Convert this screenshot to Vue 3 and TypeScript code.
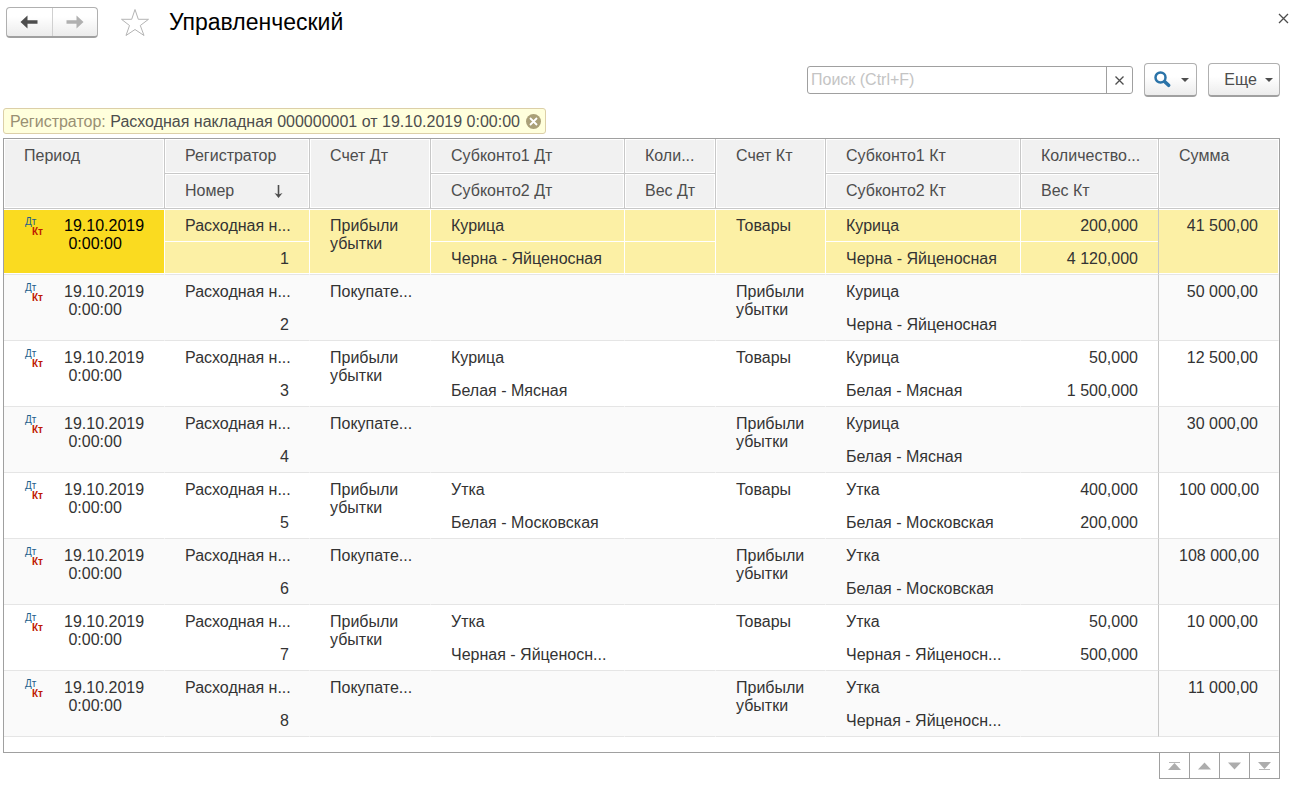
<script setup lang="ts">
import { ref } from 'vue'

interface Entry {
  id: number
  debit: string
  debitSub1: string
  debitSub2: string
  credit: string
  creditSub1: string
  creditSub2: string
  quantity: string
  weight: string
  sum: string
}

const query = ref('')
const selected = ref(1)

const PROFIT = 'Прибыли\nубытки'
const BUYERS = 'Покупате...'
const GOODS = 'Товары'

function sale(id: number, kind: string, breed: string, quantity: string, weight: string, sum: string): Entry {
  return { id, debit: PROFIT, debitSub1: kind, debitSub2: breed, credit: GOODS, creditSub1: kind, creditSub2: breed, quantity, weight, sum }
}

function income(id: number, kind: string, breed: string, sum: string): Entry {
  return { id, debit: BUYERS, debitSub1: '', debitSub2: '', credit: PROFIT, creditSub1: kind, creditSub2: breed, quantity: '', weight: '', sum }
}

const entries: Entry[] = [
  sale(1, 'Курица', 'Черна - Яйценосная', '200,000', '4 120,000', '41 500,00'),
  income(2, 'Курица', 'Черна - Яйценосная', '50 000,00'),
  sale(3, 'Курица', 'Белая - Мясная', '50,000', '1 500,000', '12 500,00'),
  income(4, 'Курица', 'Белая - Мясная', '30 000,00'),
  sale(5, 'Утка', 'Белая - Московская', '400,000', '200,000', '100 000,00'),
  income(6, 'Утка', 'Белая - Московская', '108 000,00'),
  sale(7, 'Утка', 'Черная - Яйценосн...', '50,000', '500,000', '10 000,00'),
  income(8, 'Утка', 'Черная - Яйценосн...', '11 000,00'),
]
</script>

<template>
  <main class="page">
    <header class="titlebar">
      <div class="nav">
        <button type="button" aria-label="Назад">
          <svg width="18" height="14" viewBox="0 0 18 14"><path d="M0.500 7L7.500 0.500V5.200H17.500V8.800H7.500V13.500Z" fill="#4d4d4d" /></svg>
        </button>
        <button type="button" aria-label="Вперед">
          <svg width="18" height="14" viewBox="0 0 18 14"><path d="M17.500 7L10.500 0.500V5.200H0.500V8.800H10.500V13.500Z" fill="#b0b0b0" /></svg>
        </button>
      </div>
      <button type="button" class="plain star" aria-label="Избранное">
        <svg width="30" height="30" viewBox="0 0 30 30"><path d="M15 1.500L18.300 11.300H28.500L20.300 17.500L24 27.500L15 21.500L6 27.500L9.500 17.500L1.500 11.300H11.700Z" fill="#fff" stroke="#b4b4b4" /></svg>
      </button>
      <h1>Управленческий</h1>
      <button type="button" class="plain close" aria-label="Закрыть">
        <svg width="11" height="11" viewBox="0 0 11 11"><path d="M1 1L10 10M10 1L1 10" stroke="#4d4d4d" stroke-width="1.300" /></svg>
      </button>
    </header>

    <div class="toolbar">
      <div class="search">
        <input v-model="query" type="text" placeholder="Поиск (Ctrl+F)" aria-label="Поиск">
        <button type="button" aria-label="Очистить" @click="query = ''">
          <svg width="9" height="9" viewBox="0 0 9 9"><path d="M0.500 0.500L8.500 8.500M8.500 0.500L0.500 8.500" stroke="#4d4d4d" stroke-width="1.300" /></svg>
        </button>
      </div>
      <button type="button" class="raised find" aria-label="Найти">
        <svg width="17" height="17" viewBox="0 0 17 17" fill="none" stroke="#2a73a8"><circle cx="6.500" cy="6.500" r="5" stroke-width="2.500" /><path d="M10.800 10.800L14.600 14.300" stroke-width="3.600" stroke-linecap="round" /></svg>
        <svg width="8" height="4" viewBox="0 0 8 4"><path d="M0 0H8L4 4Z" fill="#4d4d4d" /></svg>
      </button>
      <button type="button" class="raised more">
        Еще
        <svg width="8" height="4" viewBox="0 0 8 4"><path d="M0 0H8L4 4Z" fill="#4d4d4d" /></svg>
      </button>
    </div>

    <div class="filter">
      <span class="filter-text"><span class="filter-name">Регистратор:</span> Расходная накладная 000000001 от 19.10.2019 0:00:00</span>
      <button type="button" class="plain" aria-label="Снять отбор">
        <svg width="15" height="15" viewBox="0 0 15 15"><circle cx="7.500" cy="7.500" r="7.500" fill="#aaa078" /><path d="M4 4L11 11M11 4L4 11" stroke="#fff" stroke-width="1.800" /></svg>
      </button>
    </div>

    <div class="grid">
      <table>
        <colgroup>
          <col class="w-period"><col class="w-doc"><col class="w-debit"><col class="w-debit-sub"><col class="w-debit-qty">
          <col class="w-credit"><col class="w-credit-sub"><col class="w-credit-qty"><col class="w-sum">
        </colgroup>
        <thead>
          <tr>
            <th rowspan="2">Период</th>
            <th>Регистратор</th>
            <th rowspan="2">Счет Дт</th>
            <th>Субконто1 Дт</th>
            <th>Коли...</th>
            <th rowspan="2">Счет Кт</th>
            <th>Субконто1 Кт</th>
            <th>Количество...</th>
            <th rowspan="2" class="last">Сумма</th>
          </tr>
          <tr>
            <th>
              <div class="sorted">
                Номер
                <svg width="9" height="13" viewBox="0 0 9 13"><path d="M4.500 0V10" stroke="#4d4d4d" stroke-width="1.600" /><path d="M0.500 8L4.500 9.500L8.500 8L4.500 13Z" fill="#4d4d4d" /></svg>
              </div>
            </th>
            <th>Субконто2 Дт</th>
            <th>Вес Дт</th>
            <th>Субконто2 Кт</th>
            <th>Вес Кт</th>
          </tr>
        </thead>
        <tbody v-for="e in entries" :key="e.id" :class="{ selected: e.id === selected }" @click="selected = e.id">
          <tr>
            <td rowspan="2" class="tall period">
              <div class="stamp">
                <span class="dtkt"><span class="dt">Дт</span><span class="kt">Кт</span></span>
                <span>19.10.2019{{ '\n 0:00:00' }}</span>
              </div>
            </td>
            <td>Расходная н...</td>
            <td rowspan="2" class="tall">{{ e.debit }}</td>
            <td>{{ e.debitSub1 }}</td>
            <td />
            <td rowspan="2" class="tall">{{ e.credit }}</td>
            <td>{{ e.creditSub1 }}</td>
            <td class="num ruled">{{ e.quantity }}</td>
            <td rowspan="2" class="tall num last">{{ e.sum }}</td>
          </tr>
          <tr class="lower">
            <td class="num">{{ e.id }}</td>
            <td>{{ e.debitSub2 }}</td>
            <td />
            <td>{{ e.creditSub2 }}</td>
            <td class="num ruled">{{ e.weight }}</td>
          </tr>
        </tbody>
      </table>
    </div>

    <nav class="pager">
      <button type="button" aria-label="В начало">
        <svg width="13" height="8" viewBox="0 0 13 8"><path d="M1 0H12V1H1Z" fill="#b8b8b8" /><path d="M6.500 1L13 8H0Z" fill="#adadad" /></svg>
      </button>
      <button type="button" aria-label="Вверх">
        <svg width="13" height="8" viewBox="0 0 13 8"><path d="M6.500 0.500L13 7.500H0Z" fill="#adadad" /></svg>
      </button>
      <button type="button" aria-label="Вниз">
        <svg width="13" height="8" viewBox="0 0 13 8"><path d="M6.500 7.500L13 0.500H0Z" fill="#adadad" /></svg>
      </button>
      <button type="button" aria-label="В конец">
        <svg width="13" height="8" viewBox="0 0 13 8"><path d="M1 7H12V8H1Z" fill="#b8b8b8" /><path d="M6.500 7L13 0H0Z" fill="#adadad" /></svg>
      </button>
    </nav>
  </main>
</template>

<style>
body {
  margin: 0;
  background: #fff;
}
</style>

<style scoped>
.page,
.page * {
  box-sizing: border-box;
}

.page {
  padding: 7px 11px 6px 3px;
  color: #333;
  font: 16px/18px "Liberation Sans", Arial, sans-serif;
}

button,
input {
  margin: 0;
  font: inherit;
  color: inherit;
}

button {
  display: flex;
  align-items: center;
  justify-content: center;
  padding: 0;
}

svg {
  display: block;
  flex: none;
}

.plain {
  border: 0;
  background: none;
}

.titlebar {
  display: flex;
  align-items: center;
  height: 31px;
  margin-right: -9px;
  padding-left: 3px;
}

.nav {
  display: flex;
  width: 92px;
  height: 31px;
  border: 1px solid #b0b0b0;
  border-bottom: 2px solid #a0a0a0;
  border-radius: 4px;
  background: linear-gradient(#fff 30%, #ececec);
}

.nav button {
  flex: 1;
  border: 0;
  background: none;
}

.nav button + button {
  border-left: 1px solid #d0d0d0;
}

.star {
  margin-left: 22px;
}

h1 {
  margin: 0 auto 0 19px;
  padding-bottom: 2px;
  color: #000;
  font-size: 23px;
  font-weight: 400;
  line-height: 28px;
}

.close {
  margin-bottom: 8px;
}

.toolbar {
  display: flex;
  align-items: center;
  justify-content: flex-end;
  gap: 11px;
  margin-top: 25px;
  color: #4d4d4d;
}

.search {
  display: flex;
  width: 326px;
  height: 28px;
  border: 1px solid #a0a0a0;
  border-radius: 3px;
}

.search input {
  flex: 1;
  min-width: 0;
  padding: 0 3px;
  border: 0;
  outline: 0;
  background: none;
}

.search input::placeholder {
  color: #c4c4c4;
  opacity: 1;
}

.search button {
  width: 26px;
  border: 0;
  border-left: 1px solid #a0a0a0;
  background: none;
}

.raised {
  height: 34px;
  border: 1px solid #b0b0b0;
  border-bottom: 2px solid #a0a0a0;
  border-radius: 4px;
  background: linear-gradient(#fff 40%, #ececec);
}

.find {
  gap: 10px;
  width: 53px;
  padding-left: 2px;
}

.more {
  gap: 8px;
  width: 72px;
  padding-left: 9px;
}

.filter {
  display: flex;
  align-items: center;
  gap: 6px;
  width: fit-content;
  height: 26px;
  margin: 11px 0 4px;
  padding: 0 4px 0 6px;
  border: 1px solid #dccfa8;
  border-radius: 3px;
  background: #ffffdc;
  color: #4d4d4d;
}

.filter-text {
  padding-top: 2px;
}

.filter-name {
  color: #998f73;
}

.grid {
  padding-bottom: 15px;
  border: 1px solid #a0a0a0;
}

table {
  width: 100%;
  border-spacing: 0;
  table-layout: fixed;
}

.w-period { width: 161px; }
.w-doc { width: 145px; }
.w-debit { width: 121px; }
.w-debit-sub { width: 194px; }
.w-debit-qty { width: 91px; }
.w-credit { width: 110px; }
.w-credit-sub { width: 195px; }
.w-credit-qty { width: 138px; }
.w-sum { width: 120px; }

th,
td {
  padding: 8px 0 0 20px;
  text-align: left;
  vertical-align: top;
  white-space: pre;
}

th {
  height: 35px;
  border: solid #c8c8c8;
  border-width: 0 1px 1px 0;
  background: #f1f1f1;
  box-shadow: inset 0 0 0 1px #fff;
  color: #4d4d4d;
  font-weight: 400;
}

th.last {
  border-right: 0;
}

.sorted {
  display: flex;
  align-items: center;
  justify-content: space-between;
  padding-right: 26px;
  white-space: normal;
}

td {
  height: 33px;
  border-right: 1px solid transparent;
}

.lower td,
td.tall {
  border-bottom: 1px solid #e5e5e5;
}

td.num {
  padding-right: 20px;
  text-align: right;
}

td.ruled {
  border-right-color: #c8c8c8;
}

tbody:nth-of-type(even) {
  background: #fafafa;
}

tbody.selected td {
  background: #fcf0a5;
  border-right-color: #fff;
  box-shadow: inset 0 1px #fff, inset 0 -1px #fff;
}

tbody.selected td.ruled {
  border-right-color: #c8c8c8;
}

tbody.selected .lower td {
  box-shadow: inset 0 -1px #fff;
}

tbody.selected td.period {
  background: #fadb20;
  color: #000;
}

.stamp {
  display: flex;
}

.dtkt {
  display: flex;
  flex-direction: column;
  width: 40px;
  padding-left: 1px;
  font-size: 10px;
  line-height: 10px;
}

.dt {
  color: #1f5f8c;
}

.kt {
  padding-left: 7px;
  color: #c01800;
  font-weight: 700;
}

.pager {
  display: flex;
  justify-content: flex-end;
  margin-top: -1px;
}

.pager button {
  width: 31px;
  height: 27px;
  border: 1px solid #a0a0a0;
  background: #fff;
}

.pager button + button {
  margin-left: -1px;
}
</style>
